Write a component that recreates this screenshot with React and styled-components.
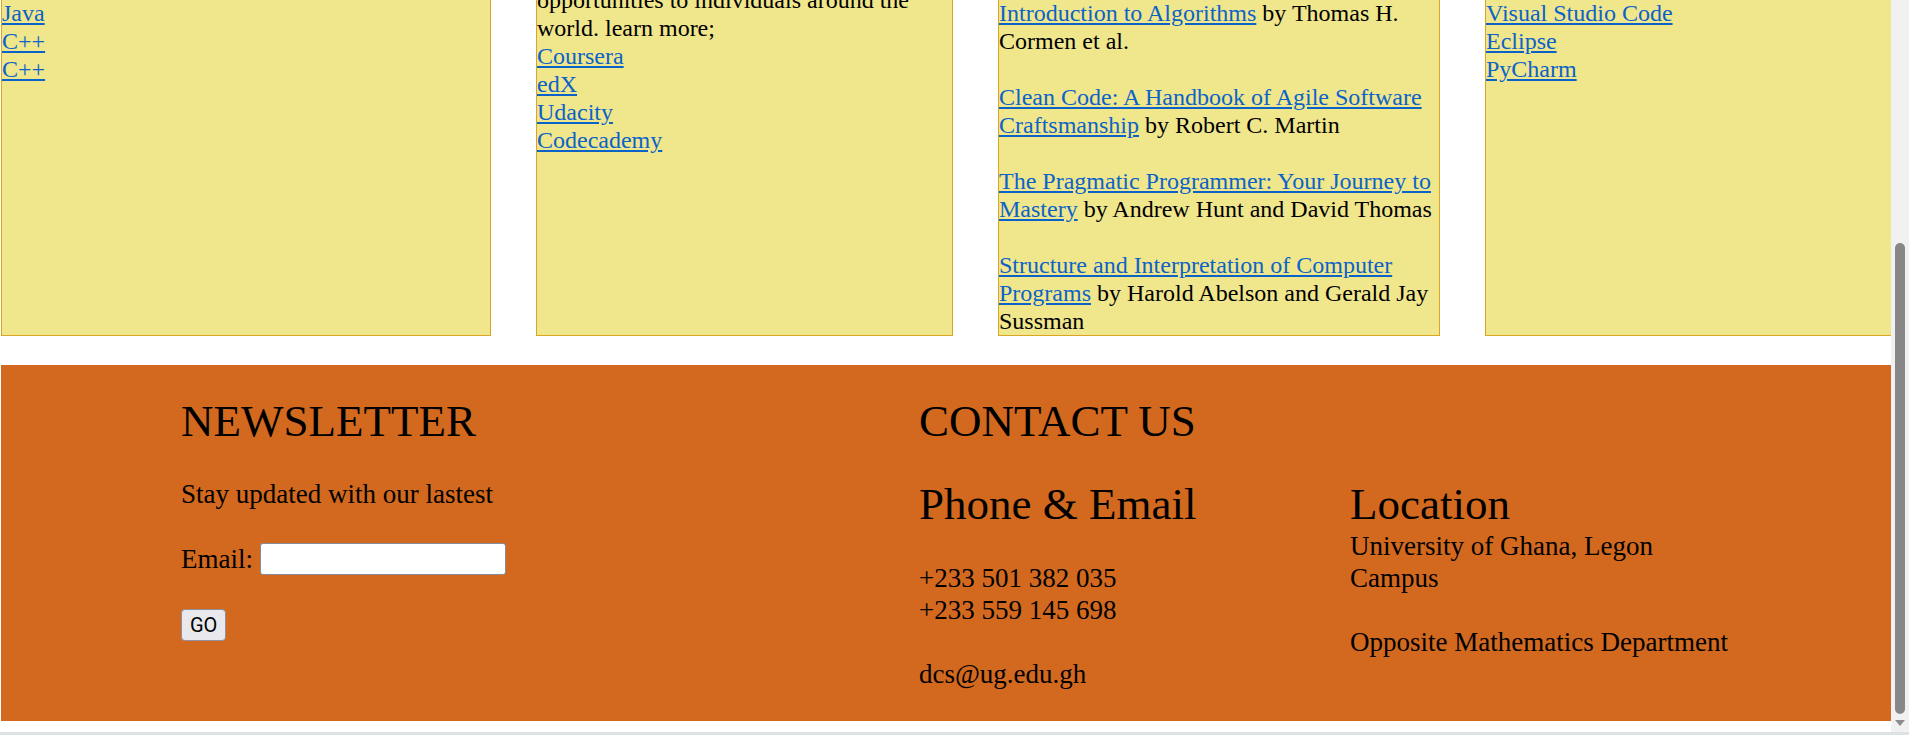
import React from 'react';
import styled, { createGlobalStyle } from 'styled-components';

const GlobalStyle = createGlobalStyle`
  *, *::before, *::after {
    box-sizing: border-box;
  }

  html, body {
    margin: 0;
    padding: 0;
    overflow: hidden;
    background: #ffffff;
    color: #000000;
    font-family: "Liberation Serif", "Times New Roman", serif;
  }
`;

const Page = styled.div`
  display: flex;
  flex-direction: column;
  height: 100vh;
`;

const Viewport = styled.div`
  display: flex;
  flex: 1;
  min-height: 0;
`;

const Main = styled.main`
  flex: 1;
  min-width: 0;
  display: flex;
  flex-direction: column;
  justify-content: flex-end;
  overflow: hidden;
  padding: 0 0 11px 1px;
`;

const CardsRow = styled.section`
  display: flex;
  gap: 45px;
  flex-shrink: 0;
`;

const Card = styled.div`
  flex-shrink: 0;
  width: ${(p) => p.$width}px;
  background-color: #f0e68c;
  border: 1px solid #daa520;
  font-size: 24px;
  line-height: 28px;
`;

const CardTitle = styled.h2`
  margin: 0 0 10px;
  font-size: 32px;
  line-height: 38px;
  font-weight: normal;
`;

const LinkList = styled.div`
  display: flex;
  flex-direction: column;
  align-items: flex-start;
`;

const Link = styled.a`
  color: #0b63c9;
  text-decoration: underline;
`;

const Intro = styled.p`
  margin: 0 0 ${(p) => p.$bottom || 0}px;
  padding-top: ${(p) => p.$top || 0}px;
`;

const Book = styled.p`
  margin: 0 0 28px;

  &:last-child {
    margin-bottom: 0;
  }
`;

const Footer = styled.footer`
  display: flex;
  flex-shrink: 0;
  margin-top: 29px;
  padding-left: 180px;
  background-color: #d2691e;
  font-size: 27px;
  line-height: 32px;
`;

const Newsletter = styled.div`
  width: 738px;
  flex-shrink: 0;
`;

const Contact = styled.div`
  flex: 1;
`;

const Heading = styled.h1`
  margin: ${(p) => (p.$sub ? `0 0 ${p.$after || 0}px` : '30px 0')};
  font-size: 45px;
  line-height: 52.5px;
  font-weight: normal;
`;

const Text = styled.p`
  margin: 30px 0 0;
`;

const EmailRow = styled.form`
  display: flex;
  align-items: center;
  gap: 7px;
  margin-top: 33px;
`;

const EmailInput = styled.input`
  width: 246px;
  height: 32px;
  border: 1px solid #858b97;
  border-radius: 3px;
  background: #ffffff;
  padding: 2px 4px;
  font-size: 20px;
`;

const GoButton = styled.button`
  display: block;
  margin-top: 34px;
  padding: 3px 8px;
  border: 1px solid #8f8f9d;
  border-radius: 4px;
  background-color: #e9e9ed;
  color: #000000;
  font-family: Roboto, "Liberation Sans", sans-serif;
  font-size: 20px;
  line-height: 24px;
`;

const ContactRow = styled.div`
  display: flex;
`;

const ContactCol = styled.div`
  width: ${(p) => p.$width}px;
  flex-shrink: 0;
`;

const Lines = styled.div`
  margin-bottom: ${(p) => p.$bottom || 0}px;
`;

const ScrollTrack = styled.div`
  width: 18px;
  flex-shrink: 0;
  display: flex;
  flex-direction: column;
  align-items: center;
  padding: 243px 0 6px;
  background-color: #f1f1f1;
`;

const Thumb = styled.div`
  flex: 1;
  width: 10px;
  border-radius: 5px;
  background-color: #878787;
`;

const Arrow = styled.div`
  margin-top: 6px;
  width: 0;
  height: 0;
  border-left: 5.5px solid transparent;
  border-right: 5.5px solid transparent;
  border-top: 6px solid #8d8d8d;
`;

const BottomEdge = styled.div`
  height: 3px;
  flex-shrink: 0;
  background-color: #dce1e4;
`;

const languages = ['Python', 'JavaScript', 'Java', 'C++', 'C++'];
const courses = ['Coursera', 'edX', 'Udacity', 'Codecademy'];
const ides = ['Sublime Text', 'IntelliJ IDEA', 'Visual Studio Code', 'Eclipse', 'PyCharm'];
const books = [
  { title: 'Introduction to Algorithms', by: 'Thomas H. Cormen et al.' },
  { title: 'Clean Code: A Handbook of Agile Software Craftsmanship', by: 'Robert C. Martin' },
  { title: 'The Pragmatic Programmer: Your Journey to Mastery', by: 'Andrew Hunt and David Thomas' },
  { title: 'Structure and Interpretation of Computer Programs', by: 'Harold Abelson and Gerald Jay Sussman' },
];

const App = () => {
  return (
    <Page>
      <GlobalStyle />
      <Viewport>
        <Main>
          <CardsRow>
            <Card $width={490}>
              <CardTitle>Programming Languages</CardTitle>
              <LinkList>
                {languages.map((name, i) => (
                  <Link key={i} href="#">{name}</Link>
                ))}
              </LinkList>
            </Card>

            <Card $width={417}>
              <CardTitle>Online Courses</CardTitle>
              <Intro $top={15}>
                These websites offer free and paid courses,
                <br />
                opportunities to individuals around the world. learn more;
              </Intro>
              <LinkList>
                {courses.map((name) => (
                  <Link key={name} href="#">{name}</Link>
                ))}
              </LinkList>
            </Card>

            <Card $width={442}>
              <CardTitle>Books</CardTitle>
              <Intro $bottom={28}>Recommended reading:</Intro>
              {books.map((b) => (
                <Book key={b.title}>
                  <Link href="#">{b.title}</Link> by {b.by}
                </Book>
              ))}
            </Card>

            <Card $width={450}>
              <CardTitle>IDEs</CardTitle>
              <LinkList>
                {ides.map((name) => (
                  <Link key={name} href="#">{name}</Link>
                ))}
              </LinkList>
            </Card>
          </CardsRow>

          <Footer>
            <Newsletter>
              <Heading>NEWSLETTER</Heading>
              <Text>Stay updated with our lastest</Text>
              <EmailRow onSubmit={(e) => e.preventDefault()}>
                <label htmlFor="email">Email:</label>
                <EmailInput id="email" type="email" />
              </EmailRow>
              <GoButton type="button">GO</GoButton>
            </Newsletter>

            <Contact>
              <Heading>CONTACT US</Heading>
              <ContactRow>
                <ContactCol $width={431}>
                  <Heading $sub $after={32}>Phone &amp; Email</Heading>
                  <Lines $bottom={31}>
                    +233 501 382 035
                    <br />
                    +233 559 145 698
                    <br />
                    <br />
                    dcs@ug.edu.gh
                  </Lines>
                </ContactCol>
                <ContactCol $width={390}>
                  <Heading $sub>Location</Heading>
                  <Lines>
                    University of Ghana, Legon Campus
                    <br />
                    <br />
                    Opposite Mathematics Department
                  </Lines>
                </ContactCol>
              </ContactRow>
            </Contact>
          </Footer>
        </Main>

        <ScrollTrack>
          <Thumb />
          <Arrow />
        </ScrollTrack>
      </Viewport>
      <BottomEdge />
    </Page>
  );
};

export default App;
